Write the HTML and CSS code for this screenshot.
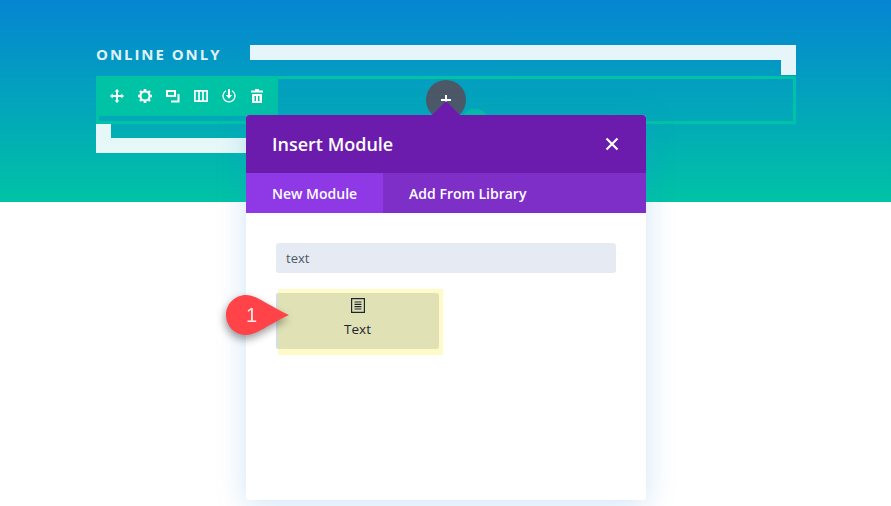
FILE: index.html
```html
<!DOCTYPE html>
<html lang="en">
<head>
<meta charset="utf-8">
<title>Insert Module</title>
<link rel="stylesheet" href="styles.css">
</head>
<body>
<div class="page">
  <section class="hero">
    <div class="top-line">
      <h2 class="eyebrow">ONLINE ONLY</h2>
      <div class="frame-top"></div>
    </div>
    <div class="row-outline">
      <div class="toolbar">
        <svg class="tool" viewBox="0 0 14 14"><path fill="#fff" d="M7 0l2.400 2.600H7.900v3.500h3.500V4.600L14 7l-2.600 2.400V7.900H7.900v3.500h1.500L7 14l-2.400-2.600h1.500V7.900H2.600v1.500L0 7l2.600-2.400v1.500h3.500V2.600H4.600z"/></svg>
        <svg class="tool" viewBox="0 0 14 14"><path fill="#fff" fill-rule="evenodd" d="M5.800 0h2.400l.3 1.800 1.200.5L11.200 1.200l1.600 1.600-1.100 1.500.5 1.200 1.800.3v2.400l-1.800.3-.5 1.200 1.100 1.500-1.600 1.600-1.500-1.100-1.200.5-.3 1.800H5.800l-.3-1.800-1.200-.5-1.500 1.100-1.600-1.600 1.100-1.500-.5-1.200L0 8.200V5.800l1.800-.3.500-1.200-1.100-1.500 1.600-1.600 1.500 1.100 1.200-.5zM7 3.500a3.500 3.500 0 100 7 3.500 3.500 0 000-7z"/></svg>
        <svg class="tool" viewBox="0 0 14 14"><path fill="none" stroke="#fff" stroke-width="2" d="M1 2h8v5H1zM12.500 5v7.500H5"/></svg>
        <svg class="tool" viewBox="0 0 14 14"><path fill="none" stroke="#fff" stroke-width="1.700" d="M.9 1.900h12.200v10.200H.9zM5 2v10M9 2v10"/></svg>
        <svg class="tool" viewBox="0 0 14 14"><path fill="none" stroke="#fff" stroke-width="1.300" d="M4 1.700a6 6 0 106 0"/><path fill="#fff" d="M6 0h2v6h2.200L7 9.800 3.800 6H6z"/></svg>
        <svg class="tool" viewBox="0 0 14 14"><path fill="#fff" fill-rule="evenodd" d="M5 0h4v1.500h4v2H1v-2h4zM2 5h10v9H2zm2.500 2v5h1.500V7zm3.500 0v5h1.500V7z"/></svg>
      </div>
    </div>
    <div class="frame-bottom"></div>
  </section>

  <div class="teal-dot"></div>
  <div class="add-button"><span class="plus-h"></span><span class="plus-v"></span></div>

  <div class="modal">
    <div class="modal-arrow"></div>
    <header class="modal-head">
      <h1 class="modal-title">Insert Module</h1>
      <svg class="close" viewBox="0 0 14 14"><path fill="none" stroke="#fff" stroke-width="2.200" d="M1.500 1.500l11 11M12.500 1.500l-11 11"/></svg>
    </header>
    <nav class="tabs">
      <a class="tab tab-active">New Module</a>
      <a class="tab">Add From Library</a>
    </nav>
    <div class="modal-body">
      <div class="search">text</div>
      <div class="module">
        <svg class="module-icon" viewBox="0 0 14 15"><path fill="none" stroke="#1d2430" stroke-width="1.200" d="M.6.600h12.800v13.800H.6zM3.500 4h7M3.500 6.300h7M3.500 8.700h7M3.500 11h7"/></svg>
        <span class="module-label">Text</span>
      </div>
    </div>
  </div>

  <div class="highlight"></div>
  <div class="callout">
    <svg class="callout-shape" viewBox="0 0 63 40"><path fill="#ff4348" d="M20 0C31 0 43 11 63 20 43 29 31 40 20 40 9 40 0 31 0 20S9 0 20 0z"/></svg>
    <span class="callout-num">1</span>
  </div>
</div>
</body>
</html>
```

FILE: styles.css
```css
* { box-sizing: border-box; }
html, body { margin: 0; padding: 0; background: #fff; }
.page {
  position: relative;
  width: 891px;
  height: 506px;
  overflow: hidden;
  font-family: "Open Sans", sans-serif;
}
.hero {
  height: 202px;
  padding: 45px 95px 0 96px;
  background: linear-gradient(180deg, #0585d2 0%, #00c3a5 100%);
}
.top-line { display: flex; height: 30px; margin-bottom: 1px; }
.eyebrow {
  width: 154px;
  margin: 0;
  font-size: 15px;
  line-height: 18px;
  font-weight: 700;
  letter-spacing: 1.95px;
  color: rgba(255, 255, 255, .9);
}
.frame-top {
  flex: 1;
  border-top: 15px solid rgba(255, 255, 255, .9);
  border-right: 15px solid rgba(255, 255, 255, .9);
}
.row-outline {
  position: relative;
  height: 48px;
  border: 3px solid #00c2a6;
}
.toolbar {
  position: absolute;
  left: -3px;
  top: -3px;
  width: 182px;
  height: 40px;
  padding: 0 14px;
  display: flex;
  align-items: center;
  justify-content: space-between;
  background: #00c3a6;
}
.tool { width: 14px; height: 14px; display: block; }
.frame-bottom {
  width: 160px;
  height: 29px;
  border-left: 15px solid rgba(255, 255, 255, .9);
  border-bottom: 15px solid rgba(255, 255, 255, .9);
}
.teal-dot {
  position: absolute;
  left: 460px;
  top: 109px;
  width: 30px;
  height: 30px;
  border-radius: 50%;
  background: #00bfa5;
}
.add-button {
  position: absolute;
  left: 426px;
  top: 80px;
  width: 40px;
  height: 40px;
  border-radius: 50%;
  background: #4c5866;
}
.plus-h { position: absolute; left: 15px; top: 19px; width: 10px; height: 2px; background: #fff; }
.plus-v { position: absolute; left: 19px; top: 15px; width: 2px; height: 10px; background: #fff; }
.modal {
  position: absolute;
  left: 246px;
  top: 115px;
  width: 400px;
  height: 385px;
  display: flex;
  flex-direction: column;
  background: #fff;
  border-radius: 3px;
  box-shadow: 0 5px 30px rgba(43, 135, 218, .22);
}
.modal-arrow {
  position: absolute;
  left: 186px;
  top: -14px;
  width: 28px;
  height: 14px;
  background: #6c1cad;
  clip-path: polygon(50% 0, 100% 100%, 0 100%);
}
.modal-head {
  height: 58px;
  flex: none;
  padding: 0 27px 0 26px;
  display: flex;
  align-items: center;
  justify-content: space-between;
  background: #6c1cad;
  border-radius: 3px 3px 0 0;
}
.modal-title {
  margin: 0;
  font-size: 18px;
  line-height: 26px;
  font-weight: 600;
  color: #fff;
}
.close { width: 14px; height: 14px; display: block; }
.tabs { display: flex; height: 40px; flex: none; background: #7d2fc7; }
.tab {
  display: flex;
  align-items: center;
  padding: 0 26px;
  font-size: 14px;
  font-weight: 600;
  color: #fff;
}
.tab-active { background: #8e38e6; }
.modal-body { flex: 1; padding: 30px 30px 0; }
.search {
  height: 30px;
  padding: 0 10px;
  display: flex;
  align-items: center;
  font-size: 13px;
  color: #4c5866;
  background: #e6ebf3;
  border-radius: 3px;
}
.module {
  position: relative;
  z-index: 1;
  width: 163px;
  height: 56px;
  margin-top: 20px;
  display: flex;
  flex-direction: column;
  align-items: center;
  background: #e0e2b6;
  box-shadow: inset 2px 0 0 #d5dfe2;
  border-radius: 3px;
}
.module-icon { width: 14px; height: 15px; margin-top: 5px; display: block; }
.module-label {
  margin-top: 7px;
  font-size: 13.5px;
  line-height: 18px;
  color: #1f2630;
}
.highlight {
  position: absolute;
  left: 278px;
  top: 289px;
  width: 165px;
  height: 66px;
  background: #fffbc8;
}
.callout {
  position: absolute;
  left: 226px;
  top: 295px;
  width: 63px;
  height: 40px;
  z-index: 2;
  filter: drop-shadow(-1px 4px 4px rgba(0, 0, 0, .4));
}
.callout-shape { width: 63px; height: 40px; display: block; }
.callout-num {
  position: absolute;
  left: 20px;
  top: 8px;
  font-family: "Liberation Sans", sans-serif;
  font-size: 20px;
  line-height: 24px;
  color: #ffe8e8;
}
```
